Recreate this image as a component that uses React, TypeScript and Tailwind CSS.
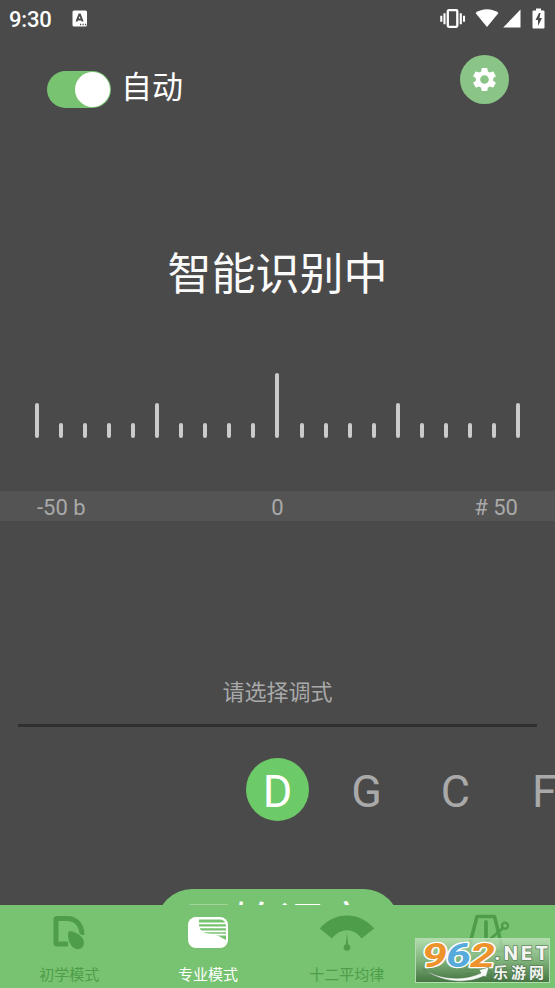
import type { ReactNode } from "react";
import { MdSettings } from "react-icons/md";

const keys = ["D", "G", "C", "F"];
const ticks = Array.from({ length: 21 }, (_, i) => i);

function tickHeight(i: number) {
  if (i === 10) return "h-[65px]";
  if (i % 5 === 0) return "h-[35px]";
  return "h-[15px]";
}

function StatusBar() {
  return (
    <div className="flex h-[38px] items-center pl-[9px] pr-[10px] text-white">
      <span className="w-[63px] pt-0.5 text-[22px] font-medium leading-[36px] tracking-[-0.2px]">9:30</span>
      <svg width="16" height="17" viewBox="0 0 16 17" className="-mt-0.5">
        <rect x="0.5" y="0.5" width="14.5" height="16" rx="1.500" fill="#fff" />
        <path d="M4.500 11.500 7.300 4.500H7.900L10.700 11.500M5.500 9.500h4" fill="none" stroke="#4a4a4a" strokeWidth="1.900" />
        <path d="M8 14.500h1.200M10.500 14.500h1.200M13 14.500h1.200" stroke="#4a4a4a" strokeWidth="1.400" />
      </svg>
      <div className="flex-1" />
      <svg width="26" height="20" viewBox="0 0 26 20" fill="none" stroke="#fff" className="mr-[9px]">
        <rect x="7.800" y="1.200" width="9.500" height="16.600" rx="1" strokeWidth="2.300" />
        <path d="M4.500 4.200v11M20.800 4.200v11M1.300 6.700v6M24 6.700v6" strokeWidth="2.100" />
      </svg>
      <svg width="24" height="19" viewBox="0 0 24 19" className="mr-[4px] -mt-px">
        <path d="M0.500 4C7-1 17-1 23.500 4L12 18Z" fill="#fff" />
      </svg>
      <svg width="18" height="19" viewBox="0 0 18 19" className="mr-[11px] -mt-px">
        <path d="M17.500.5v18H.2Z" fill="#fff" />
      </svg>
      <svg width="13" height="21" viewBox="0 0 13 21" className="-mt-0.5">
        <path d="M4 .5h5v2h2.500q1 0 1 1v16q0 1-1 1h-10q-1 0-1-1v-16q0-1 1-1H4Z" fill="#fff" />
        <path d="M7 5 3.500 12H6v6l4-8H7.500L8.500 5Z" fill="#4a4a4a" />
      </svg>
    </div>
  );
}

function BeginnerIcon() {
  return (
    <svg width="34" height="36" viewBox="0 0 34 36">
      <path
        d="M16 28H5Q4 28 4 27V3.500Q4 2.500 5 2.500H15C24 2.500 30 9 30 19"
        fill="none"
        stroke="#4e9d4a"
        strokeWidth="5"
      />
      <path
        d="M17 14C24 15 31.500 19 32.700 26C33.200 31 30 34 26 34C21 34 18.500 31 16.500 26C15 21.500 14.500 17 17 14Z"
        fill="#4e9d4a"
        stroke="#78c371"
        strokeWidth="1.500"
      />
    </svg>
  );
}

function ProIcon() {
  return (
    <svg width="40" height="31" viewBox="0 0 40 31" className="mb-[2px]">
      <rect width="40" height="31" rx="8" fill="#fff" />
      <path d="M11 2.500H32Q38 3 38 9V23C34 21.500 31 18 24 17C16 16.500 11 14 11 8Z" fill="#78c371" />
      <path d="M11 6.300H38M11 10.300H38M11 14.300H38M18 17.700H38" stroke="#fff" strokeWidth="1.700" />
    </svg>
  );
}

function TemperamentIcon() {
  return (
    <svg width="56" height="38" viewBox="0 0 56 38">
      <path d="M.8 13.500C15-4 41-4 55.200 13.500L42.500 23.500C35 12.500 21 12.500 13 23.500Z" fill="#4e9d4a" />
      <path d="M28 17.500 26.700 31H29.300Z" fill="#4e9d4a" />
      <circle cx="28" cy="32.500" r="3.300" fill="#4e9d4a" />
    </svg>
  );
}

function MetronomeIcon() {
  return (
    <svg width="42" height="38" viewBox="0 0 42 38" fill="none" stroke="#4e9d4a" strokeLinecap="round" className="overflow-visible">
      <path d="M12 1.500H29.500L38 36H3Z" strokeWidth="3.500" strokeLinejoin="round" />
      <path d="M21 7V25" strokeWidth="3.800" />
      <path d="M23 26 38 13" strokeWidth="2.800" />
      <circle cx="40" cy="10.700" r="3" strokeWidth="2.300" />
    </svg>
  );
}

function NavItem({ label, active, children }: { label: string; active?: boolean; children: ReactNode }) {
  return (
    <div className="flex flex-1 flex-col items-center">
      <div className="flex h-[57px] items-center justify-center">{children}</div>
      <span className={`pt-px text-[15px] leading-6 ${active ? "text-white" : "text-[#4e9d4a]"}`}>{label}</span>
    </div>
  );
}

// Site badge floating above the nav
function Badge() {
  return (
    <div className="absolute bottom-[5px] right-[5px] h-[45px] w-[135px] border border-[#b5d9b1] bg-linear-to-b from-[#c4e4c0]/75 via-[#83af7f]/80 to-[#3c693a]/85">
      <svg width="133" height="43" viewBox="0 0 133 43" className="overflow-visible">
        <g fontFamily="Roboto, 'Liberation Sans', sans-serif" fontWeight="700" fontStyle="italic" fontSize="34" strokeWidth="2.600" strokeLinejoin="round" stroke="#fff" paintOrder="stroke">
          <text x="6" y="27.500" textLength="25" lengthAdjust="spacingAndGlyphs" fill="#ee922c">9</text>
          <text x="30" y="27.500" textLength="25" lengthAdjust="spacingAndGlyphs" fill="#56abdc">6</text>
          <text x="54" y="27.500" textLength="25" lengthAdjust="spacingAndGlyphs" fill="#ee922c">2</text>
        </g>
        <g fill="#f2f5f1" stroke="#4d704c" strokeWidth="1.200" paintOrder="stroke">
          <text x="78" y="21" fontFamily="Inter, sans-serif" fontWeight="800" fontSize="18.500" textLength="54" lengthAdjust="spacing">.NET</text>
          <text x="77" y="39" fontFamily="'Noto Sans CJK SC', sans-serif" fontWeight="700" fontSize="15" textLength="51">乐游网</text>
        </g>
        <path d="M7 30C25 41 48 42 65 34L63 31 73 28 70 38 68 37C50 46 24 43 7 30Z" fill="#f6faf5" stroke="#4d704c" strokeWidth=".5" />
      </svg>
    </div>
  );
}

export default function App() {
  return (
    <div className="relative flex h-[988px] w-full flex-col overflow-hidden bg-[#4a4a4a] font-['Roboto','Noto_Sans_CJK_SC',sans-serif]">
      <StatusBar />

      <header className="flex h-[84px] shrink-0 items-start pl-[47px] pr-[46px]">
        <div className="mt-[33px] flex h-[37px] w-[64px] items-center justify-end rounded-full bg-[#78c371] pr-px">
          <div className="size-[35px] rounded-full bg-white" />
        </div>
        <span className="ml-[10px] mt-[28px] text-[31px] leading-[44px] text-white">自动</span>
        <button className="ml-auto mt-[17px] flex size-[49px] items-center justify-center rounded-full bg-[#8ac486] text-white">
          <MdSettings size={29} />
        </button>
      </header>

      <h1 className="mt-[121px] h-[64px] shrink-0 text-center text-[44px] leading-[64px] text-[#fafafa]">智能识别中</h1>

      {/* Cents scale */}
      <div className="mt-[66px] flex h-[65px] shrink-0 items-end justify-between pl-[35px] pr-[35px]">
        {ticks.map((i) => (
          <span key={i} className={`w-1 rounded-full bg-[#cbcbcb] ${tickHeight(i)}`} />
        ))}
      </div>
      <div className="mt-[53px] grid h-[30px] shrink-0 grid-cols-3 items-center bg-[#545454] px-[37px] pt-[4px] text-[22px] leading-[26px] text-[#a9a9a9]">
        <span>-50 b</span>
        <span className="text-center">0</span>
        <span className="text-right"># 50</span>
      </div>

      <p className="mt-[156px] shrink-0 text-center text-[22px] leading-8 text-[#a9a9a9]">请选择调式</p>
      <div className="mx-[18px] mt-[15px] h-[3px] shrink-0 bg-[#303030]" />

      <div className="mt-[31px] flex h-[63px] shrink-0 pl-[233px]">
        {keys.map((key, i) => (
          <div key={key} className="flex w-[89px] shrink-0 justify-center">
            <span
              className={
                i === 0
                  ? "flex size-[63px] items-center justify-center rounded-full bg-[#6dca68] pt-[4px] text-[45px] text-white"
                  : "flex size-[63px] items-center justify-center pt-[4px] text-[45px] text-[#a9a9a9]"
              }
            >
              {key}
            </span>
          </div>
        ))}
      </div>

      {/* Start button runs under the bottom nav */}
      <div className="flex min-h-0 flex-1 items-start justify-center overflow-hidden pt-[68px]">
        <button className="h-[70px] w-[242px] shrink-0 rounded-full bg-[#78c371] text-[46px] leading-[70px] text-white">
          开始调音
        </button>
      </div>

      <nav className="flex h-[83px] shrink-0 bg-[#78c371]">
        <NavItem label="初学模式">
          <BeginnerIcon />
        </NavItem>
        <NavItem label="专业模式" active>
          <ProIcon />
        </NavItem>
        <NavItem label="十二平均律">
          <TemperamentIcon />
        </NavItem>
        <NavItem label="节拍器">
          <MetronomeIcon />
        </NavItem>
      </nav>

      <Badge />
    </div>
  );
}
